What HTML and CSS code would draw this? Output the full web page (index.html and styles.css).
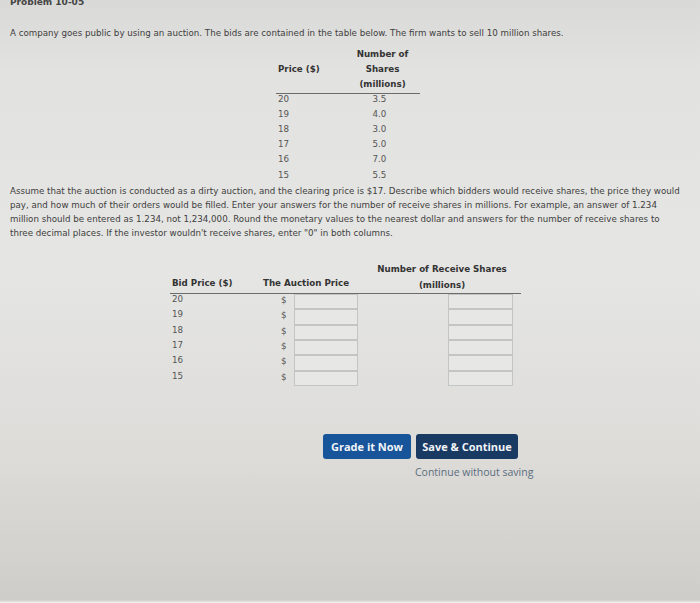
FILE: index.html
```
<!DOCTYPE html>
<html>
<head>
<meta charset="utf-8">
<link rel="stylesheet" href="styles.css">
</head>
<body>
<div class="page">
  <div class="title">Problem 10-05</div>
  <p class="intro">A company goes public by using an auction. The bids are contained in the table below. The firm wants to sell 10 million shares.</p>

  <div class="bids">
    <div class="bids-head">
      <div class="h-price">Price ($)</div>
      <div class="h-shares">Number of<br>Shares<br>(millions)</div>
    </div>
    <div class="bids-row"><span class="c-price">20</span><span class="c-shares">3.5</span></div>
    <div class="bids-row"><span class="c-price">19</span><span class="c-shares">4.0</span></div>
    <div class="bids-row"><span class="c-price">18</span><span class="c-shares">3.0</span></div>
    <div class="bids-row"><span class="c-price">17</span><span class="c-shares">5.0</span></div>
    <div class="bids-row"><span class="c-price">16</span><span class="c-shares">7.0</span></div>
    <div class="bids-row"><span class="c-price">15</span><span class="c-shares">5.5</span></div>
  </div>

  <p class="question"><span class="ln">Assume that the auction is conducted as a dirty auction, and the clearing price is $17. Describe which bidders would receive shares, the price they would</span><span class="ln">pay, and how much of their orders would be filled. Enter your answers for the number of receive shares in millions. For example, an answer of 1.234</span><span class="ln">million should be entered as 1.234, not 1,234,000. Round the monetary values to the nearest dollar and answers for the number of receive shares to</span><span class="ln">three decimal places. If the investor wouldn't receive shares, enter "0" in both columns.</span></p>

  <div class="answers">
    <div class="ans-head">
      <div class="a-bid">Bid Price ($)</div>
      <div class="a-price">The Auction Price</div>
      <div class="a-recv">Number of Receive Shares<br>(millions)</div>
    </div>
    <div class="ans-row"><span class="r-bid">20</span><span class="r-dollar">$</span><span class="box b1"></span><span class="box b2"></span></div>
    <div class="ans-row"><span class="r-bid">19</span><span class="r-dollar">$</span><span class="box b1"></span><span class="box b2"></span></div>
    <div class="ans-row"><span class="r-bid">18</span><span class="r-dollar">$</span><span class="box b1"></span><span class="box b2"></span></div>
    <div class="ans-row"><span class="r-bid">17</span><span class="r-dollar">$</span><span class="box b1"></span><span class="box b2"></span></div>
    <div class="ans-row"><span class="r-bid">16</span><span class="r-dollar">$</span><span class="box b1"></span><span class="box b2"></span></div>
    <div class="ans-row"><span class="r-bid">15</span><span class="r-dollar">$</span><span class="box b1"></span><span class="box b2"></span></div>
  </div>

  <div class="actions">
    <div class="btns">
      <button class="btn grade">Grade it Now</button>
      <button class="btn save">Save &amp; Continue</button>
    </div>
    <a class="skip">Continue without saving</a>
  </div>
</div>
</body>
</html>
```
FILE: styles.css
```
html, body {
  margin: 0;
  height: 100%;
}
body {
  width: 700px;
  height: 603px;
  overflow: hidden;
  font-family: "DejaVu Sans", Verdana, sans-serif;
  font-size: 8.7px;
  line-height: 14px;
  color: #404040;
  background: linear-gradient(180deg, #d9d9d7 0%, #e2e2e0 12%, #e5e5e3 45%, #dddcd9 75%, #cfcdc9 99.5%, #f4f4f2 100%);
}
.page {
  padding: 0 10px;
}
.title {
  font-weight: bold;
  font-size: 9px;
  color: #444;
  margin-top: -5px;
  height: 14px;
}
.intro {
  margin: 17px 0 0;
  white-space: nowrap;
}
.bids {
  margin: 7px 0 0 266px;
  width: 144px;
  color: #555;
}
.bids-head {
  display: flex;
  align-items: center;
  border-bottom: 1px solid #6c6c6c;
  font-weight: bold;
  color: #333;
  line-height: 15.2px;
}
.h-price {
  width: 69px;
  padding-left: 2px;
  box-sizing: border-box;
}
.h-shares {
  flex: 1;
  text-align: center;
}
.bids-row {
  display: flex;
  height: 15.2px;
  line-height: 11px;
}
.c-price {
  width: 69px;
  padding-left: 2px;
  box-sizing: border-box;
}
.c-shares {
  flex: 1;
  text-align: center;
  padding-right: 6px;
}
.question {
  margin: -1px 0 0;
}
.ln {
  display: block;
  white-space: nowrap;
}
.answers {
  margin: 21px 0 0 160px;
  width: 351px;
  color: #555;
}
.ans-head {
  display: flex;
  align-items: flex-end;
  border-bottom: 1px solid #6c6c6c;
  font-weight: bold;
  color: #333;
  line-height: 16px;
}
.a-bid {
  width: 93px;
  padding-left: 2px;
  box-sizing: border-box;
  padding-bottom: 2px;
}
.a-price {
  width: 100px;
  padding-bottom: 2px;
}
.a-recv {
  flex: 1;
  text-align: center;
}
.ans-row {
  display: flex;
  align-items: flex-start;
  height: 15.4px;
  line-height: 11px;
}
.r-bid {
  width: 111px;
  padding-left: 2px;
  box-sizing: border-box;
}
.r-dollar {
  width: 13px;
  line-height: 13px;
}
.box {
  height: 15.4px;
  box-sizing: border-box;
  border: 1px solid #c3c5c5;
  background: #e7e8e6;
}
.b1 {
  width: 64px;
}
.b2 {
  width: 65px;
  margin-left: 90px;
}
.actions {
  margin: 48px 0 0 313px;
  width: 230px;
}
.btns {
  display: flex;
  gap: 5px;
}
.btn {
  font-family: "Open Sans", "DejaVu Sans", sans-serif;
  font-weight: bold;
  font-size: 11px;
  color: #f2f4f8;
  border: none;
  border-radius: 3px;
  height: 25px;
  padding: 0;
}
.grade {
  width: 88px;
  background: #18549a;
}
.save {
  width: 102px;
  background: #193a63;
}
.skip {
  display: block;
  white-space: nowrap;
  margin: 6px 0 0 92px;
  font-family: "Open Sans", "DejaVu Sans", sans-serif;
  font-size: 10.5px;
  color: #5b6d7f;
}
```
